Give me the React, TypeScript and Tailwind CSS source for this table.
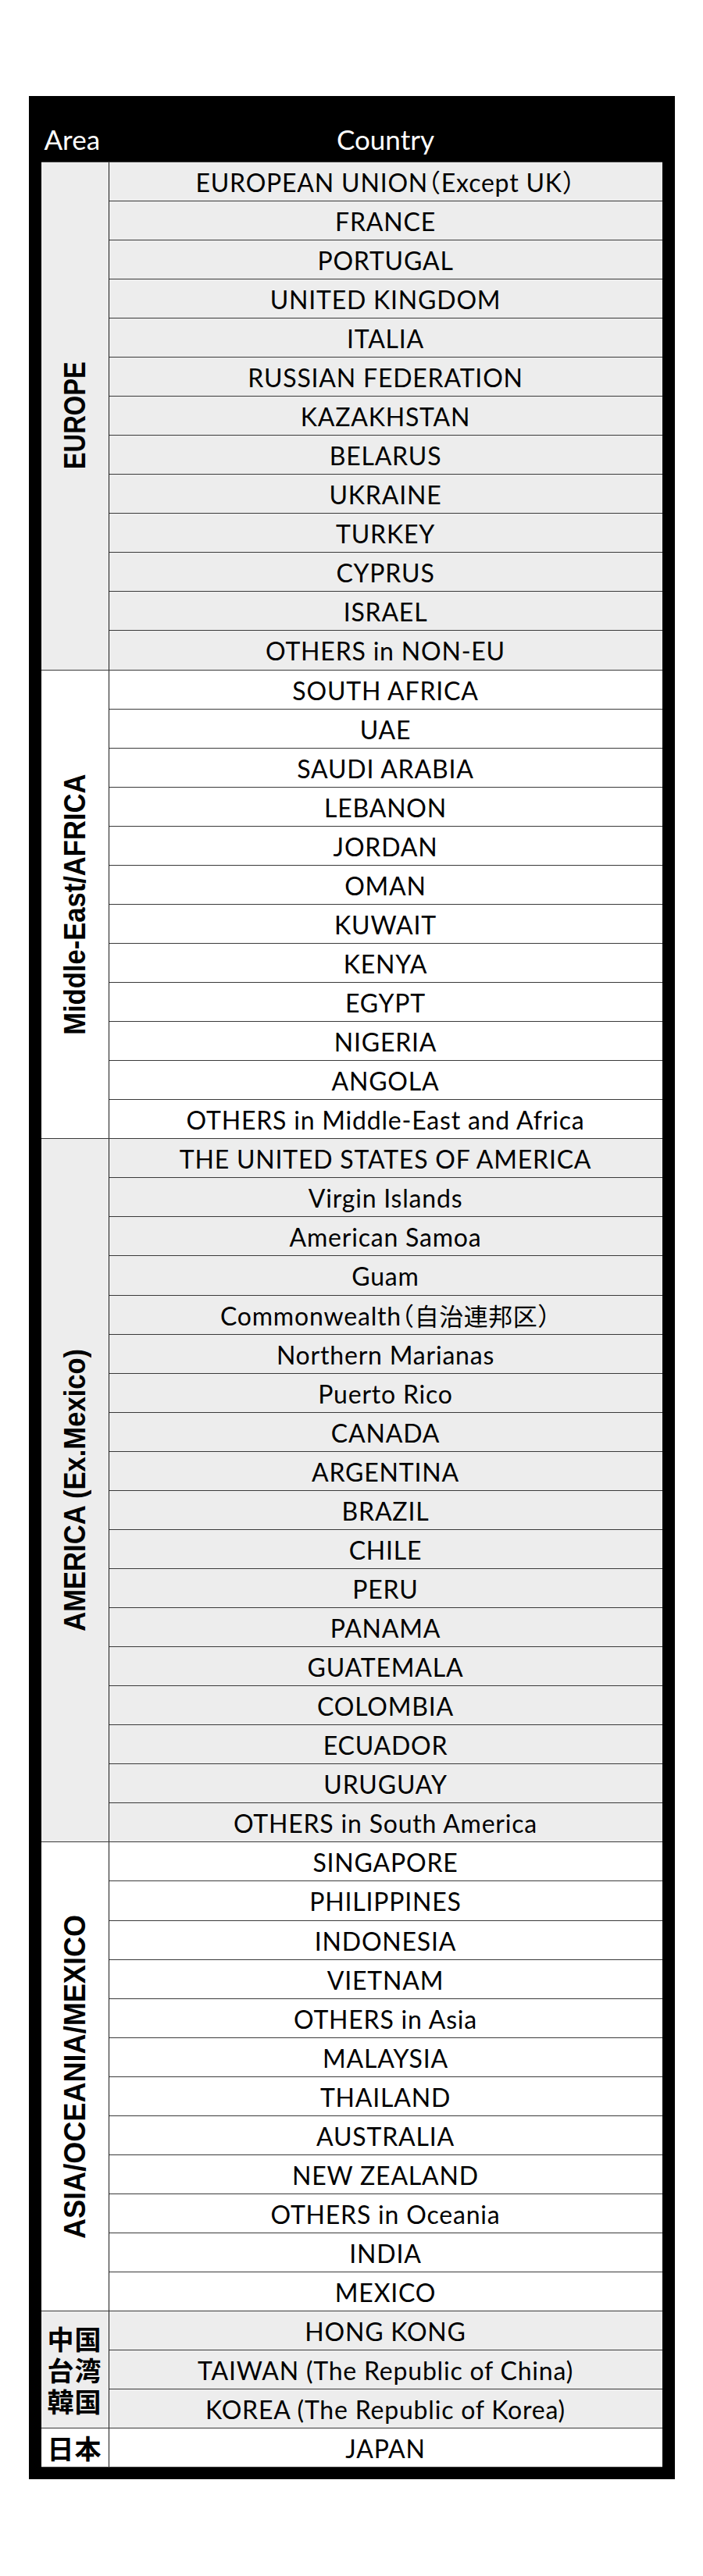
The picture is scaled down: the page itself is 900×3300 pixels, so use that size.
import React from "react";

type Group = {
  label: string;
  cjk?: boolean;
  bg: string;
  labelClass: string;
  rows: string[];
};

const groups: Group[] = [
  {
    label: "EUROPE",
    bg: "bg-[#ededed]",
    labelClass: "scale-y-[0.86]",
    rows: [
      "EUROPEAN UNION（Except UK）",
      "FRANCE",
      "PORTUGAL",
      "UNITED KINGDOM",
      "ITALIA",
      "RUSSIAN FEDERATION",
      "KAZAKHSTAN",
      "BELARUS",
      "UKRAINE",
      "TURKEY",
      "CYPRUS",
      "ISRAEL",
      "OTHERS in NON-EU",
    ],
  },
  {
    label: "Middle-East/AFRICA",
    bg: "bg-white",
    labelClass: "scale-y-[0.91]",
    rows: [
      "SOUTH AFRICA",
      "UAE",
      "SAUDI ARABIA",
      "LEBANON",
      "JORDAN",
      "OMAN",
      "KUWAIT",
      "KENYA",
      "EGYPT",
      "NIGERIA",
      "ANGOLA",
      "OTHERS in Middle-East and Africa",
    ],
  },
  {
    label: "AMERICA (Ex.Mexico)",
    bg: "bg-[#ededed]",
    labelClass: "scale-y-[0.91]",
    rows: [
      "THE UNITED STATES OF AMERICA",
      "Virgin Islands",
      "American Samoa",
      "Guam",
      "Commonwealth（自治連邦区）",
      "Northern Marianas",
      "Puerto Rico",
      "CANADA",
      "ARGENTINA",
      "BRAZIL",
      "CHILE",
      "PERU",
      "PANAMA",
      "GUATEMALA",
      "COLOMBIA",
      "ECUADOR",
      "URUGUAY",
      "OTHERS in South America",
    ],
  },
  {
    label: "ASIA/OCEANIA/MEXICO",
    bg: "bg-white",
    labelClass: "scale-y-[0.95]",
    rows: [
      "SINGAPORE",
      "PHILIPPINES",
      "INDONESIA",
      "VIETNAM",
      "OTHERS in Asia",
      "MALAYSIA",
      "THAILAND",
      "AUSTRALIA",
      "NEW ZEALAND",
      "OTHERS in Oceania",
      "INDIA",
      "MEXICO",
    ],
  },
  {
    label: "中国\n台湾\n韓国",
    cjk: true,
    bg: "bg-[#ededed]",
    labelClass: "",
    rows: [
      "HONG KONG",
      "TAIWAN (The Republic of China)",
      "KOREA (The Republic of Korea)",
    ],
  },
  {
    label: "日本",
    cjk: true,
    bg: "bg-white",
    labelClass: "",
    rows: ["JAPAN"],
  },
];

const countryFont =
  "font-['Lato','Noto_Sans_CJK_JP',sans-serif] font-normal tracking-[0.8px] [font-feature-settings:'halt']";

function CountryText({ text }: { text: string }) {
  const parts = text.split(/([\u4e00-\u9fff]+)/);
  return (
    <>
      {parts.map((p, i) =>
        /[\u4e00-\u9fff]/.test(p) ? (
          <span key={i} className="tracking-[0.5px] text-[31px]">
            {p}
          </span>
        ) : (
          <React.Fragment key={i}>{p}</React.Fragment>
        )
      )}
    </>
  );
}

function AreaLabel({ g }: { g: Group }) {
  if (g.cjk) {
    const lines = g.label.split("\n");
    return (
      <div className="font-['Noto_Sans_CJK_JP',sans-serif] font-bold text-[34px] leading-[40px] text-black text-center tracking-[1px]">
        {lines.map((l, i) => (
          <React.Fragment key={l}>
            {i > 0 && <br />}
            {l}
          </React.Fragment>
        ))}
      </div>
    );
  }
  return (
    <div
      className={`[writing-mode:vertical-rl] rotate-180 ${g.labelClass} font-['Liberation_Sans',Arial,sans-serif] font-bold text-[38px] leading-none text-black whitespace-nowrap`}
    >
      {g.label}
    </div>
  );
}

export default function App() {
  return (
    <div className="w-full bg-white min-h-[3300px] pt-[123px]">
      <div className="mx-auto w-[827px] bg-black px-[16px] pb-[15px]">
        <div className="flex h-[83.7px] items-end pb-[11px] text-white font-['Lato',sans-serif] font-normal text-[35px] leading-none">
          <div className="w-[87px] pl-[4px]">Area</div>
          <div className="flex-1 text-center">Country</div>
        </div>
        <div className="border-b border-[#3a3a3a]">
          {groups.map((g) => (
            <div
              key={g.label}
              className={`flex border-t border-[#3a3a3a] ${g.bg}`}
            >
              <div className="w-[87px] shrink-0 border-r border-[#1a1a1a] flex items-center justify-center overflow-hidden">
                <AreaLabel g={g} />
              </div>
              <div className="flex-1 flex flex-col">
                {g.rows.map((r, i) => (
                  <div
                    key={r}
                    className={`${
                      i === 0
                        ? "h-[49.07px]"
                        : "h-[50.07px] border-t border-[#3a3a3a]"
                    } flex items-center justify-center pt-[3px] ${countryFont} text-[32px] leading-none text-black whitespace-nowrap`}
                  >
                    <span>
                      <CountryText text={r} />
                    </span>
                  </div>
                ))}
              </div>
            </div>
          ))}
        </div>
      </div>
    </div>
  );
}
